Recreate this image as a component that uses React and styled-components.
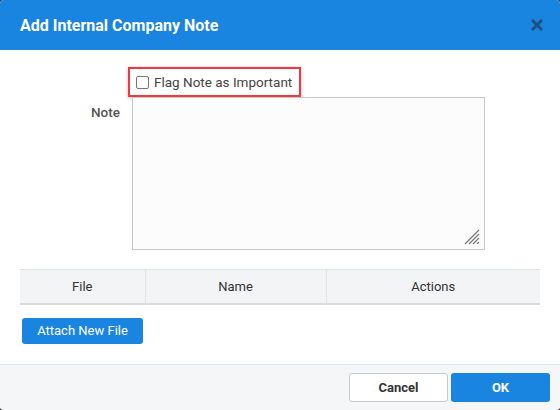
import React from "react";
import styled, { createGlobalStyle } from "styled-components";

const Global = createGlobalStyle`
  html, body { margin: 0; padding: 0; background: #3a3a3a; }
  body { font-family: Roboto, "Liberation Sans", Arial, sans-serif; }
  * { box-sizing: border-box; }
`;

const Dialog = styled.div`
  width: 560px;
  height: 410px;
  background: #fff;
  border-radius: 4px;
  overflow: hidden;
  display: flex;
  flex-direction: column;
`;

const Header = styled.div`
  height: 50px;
  flex: none;
  background: #1a84e1;
  display: flex;
  align-items: center;
  justify-content: space-between;
  padding: 0 16px 0 20px;
`;

const Title = styled.h1`
  margin: 0;
  font-size: 16px;
  font-weight: 700;
  color: #fff;
  letter-spacing: 0;
`;

const Close = styled.button`
  border: 0;
  background: none;
  padding: 0;
  width: 14px;
  height: 14px;
  display: flex;
  align-items: center;
  justify-content: center;
  cursor: pointer;
`;

const Body = styled.div`
  flex: 1;
  padding: 17px 20px 0 20px;
  display: flex;
  flex-direction: column;
`;

const FormRow = styled.div`
  display: grid;
  grid-template-columns: 100px 353px;
  column-gap: ${(p) => p.$gap || 12}px;
  align-items: start;
`;

const Label = styled.label`
  text-align: right;
  font-size: 13.5px;
  font-weight: 500;
  color: #555;
  padding-top: ${(p) => p.$top || 0}px;
`;

const Highlight = styled.label`
  width: 173px;
  height: 30px;
  border: 2px solid #f0393e;
  box-shadow: 0 1px 4px rgba(0, 0, 0, 0.25);
  display: flex;
  align-items: center;
  gap: 5px;
  padding-left: 6px;
  font-size: 13.5px;
  color: #444;
  cursor: pointer;
`;

const Box = styled.span`
  width: 13px;
  height: 13px;
  border: 1px solid #777;
  border-radius: 2px;
  background: #fff;
  flex: none;
`;

const AreaWrap = styled.div`
  position: relative;
  width: 353px;
  height: 153px;
`;

const TextArea = styled.textarea`
  width: 353px;
  height: 153px;
  border: 1px solid #c8c8c8;
  border-radius: 0;
  background: #fcfcfc;
  resize: none;
  font-family: inherit;
  font-size: 13px;
  outline: none;
  padding: 6px;
  display: block;
`;

const Grip = styled.svg`
  position: absolute;
  right: 5px;
  bottom: 5px;
  pointer-events: none;
`;

const Table = styled.table`
  margin-top: 19px;
  width: 520px;
  border-collapse: collapse;
  table-layout: fixed;
`;

const Th = styled.th`
  height: 34px;
  background: #f2f4f6;
  border-top: 1px solid #e1e3e5;
  border-bottom: 2px solid #d9dbdd;
  border-left: 1px solid #e1e3e5;
  font-size: 13px;
  font-weight: 400;
  color: #333;
  text-align: center;
  width: ${(p) => p.$w}px;
  &:first-child { border-left: 0; }
`;

const Primary = styled.button`
  border: 0;
  background: #1a84e1;
  color: #fff;
  font-family: inherit;
  font-size: 13px;
  font-weight: ${(p) => (p.$bold ? 700 : 400)};
  border-radius: 3px;
  width: ${(p) => p.$w}px;
  height: ${(p) => p.$h}px;
  padding: 0;
  cursor: pointer;
`;

const Attach = styled(Primary)`
  margin-top: 13px;
  margin-left: 2px;
  align-self: flex-start;
`;

const Footer = styled.div`
  height: 46px;
  flex: none;
  background: #f5f6f7;
  border-top: 1px solid #e2e3e4;
  display: flex;
  justify-content: flex-end;
  align-items: flex-start;
  gap: 3px;
  padding: 8px 10px 0 0;
`;

const Secondary = styled.button`
  width: 99px;
  height: 29px;
  border: 1px solid #c9c9c9;
  border-radius: 3px;
  background: #fff;
  color: #333;
  font-family: inherit;
  font-size: 13px;
  font-weight: 700;
  cursor: pointer;
`;

export default function App() {
  return (
    <>
      <Global />
      <Dialog>
        <Header>
          <Title>Add Internal Company Note</Title>
          <Close aria-label="Close">
            <svg width="12" height="12" viewBox="0 0 12 12">
              <path d="M2 2 L10 10 M10 2 L2 10" stroke="#1d4f80" strokeWidth="3" strokeLinecap="square" />
            </svg>
          </Close>
        </Header>
        <Body>
          <FormRow $gap={8}>
            <span />
            <Highlight>
              <Box />
              Flag Note as Important
            </Highlight>
          </FormRow>
          <FormRow $gap={12}>
            <Label $top={7}>Note</Label>
            <AreaWrap>
              <TextArea />
              <Grip width="16" height="16" viewBox="0 0 16 16">
                <path
                  d="M1 15 L15 1 M5 15 L15 5 M9 15 L15 9 M13 15 L15 13"
                  stroke="#777"
                  strokeWidth="1.2"
                  fill="none"
                />
              </Grip>
            </AreaWrap>
          </FormRow>
          <Table>
            <thead>
              <tr>
                <Th $w={125}>File</Th>
                <Th $w={181}>Name</Th>
                <Th $w={214}>Actions</Th>
              </tr>
            </thead>
          </Table>
          <Attach $w={121} $h={26}>Attach New File</Attach>
        </Body>
        <Footer>
          <Secondary>Cancel</Secondary>
          <Primary $w={99} $h={29} $bold>OK</Primary>
        </Footer>
      </Dialog>
    </>
  );
}
